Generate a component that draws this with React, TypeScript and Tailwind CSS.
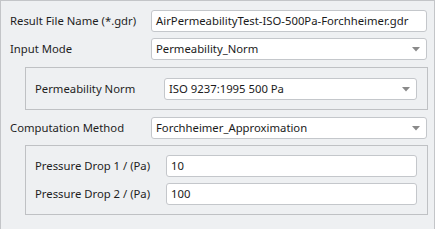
import React from 'react';

const font = { fontFamily: '"Noto Sans", "Open Sans", sans-serif' };

function Arrow() {
  return (
    <svg width="8" height="5" viewBox="0 0 8 5" className="shrink-0">
      <path d="M0 0 H8 L4 4.5 Z" fill="#8a8a8a" />
    </svg>
  );
}

function TextBox({ value, width }: { value: string; width: string }) {
  return (
    <div className={`${width} h-[22px] flex items-center pl-[4px] bg-white border border-[#c4c7cb] rounded-[3px] text-[#1b1b1b] whitespace-nowrap overflow-hidden`}>
      {value}
    </div>
  );
}

function Select({ value, width }: { value: string; width: string }) {
  return (
    <div className={`${width} h-[22px] flex items-center justify-between pl-[4px] pr-[6px] bg-white border border-[#c4c7cb] rounded-[3px] text-[#1b1b1b] whitespace-nowrap`}>
      <span>{value}</span>
      <Arrow />
    </div>
  );
}

export default function App() {
  return (
    <div style={font} className="w-[435px] h-[229px] bg-[#eef0f2] border border-b-0 border-[#c3c5c8] pl-[9px] pr-[6px] pt-[9px] text-[11.3px] text-[#1e1e1e] flex flex-col">
      <div className="flex items-center h-[22px]">
        <div className="w-[141px]">Result File Name (*.gdr)</div>
        <TextBox value="AirPermeabilityTest-ISO-500Pa-Forchheimer.gdr" width="w-[276px]" />
      </div>
      <div className="flex items-center h-[22px] mt-[6px]">
        <div className="w-[141px]">Input Mode</div>
        <Select value="Permeability_Norm" width="w-[276px]" />
      </div>
      <div className="ml-[15px] mt-[7px] w-[403px] border border-[#bfc1c4] pl-[9px] pr-[10px] pt-[10px] pb-[9px]">
        <div className="flex items-center h-[22px]">
          <div className="w-[129px]">Permeability Norm</div>
          <Select value="ISO 9237:1995 500 Pa" width="w-[253px]" />
        </div>
      </div>
      <div className="flex items-center h-[22px] mt-[7px]">
        <div className="w-[141px]">Computation Method</div>
        <Select value="Forchheimer_Approximation" width="w-[276px]" />
      </div>
      <div className="ml-[15px] mt-[6px] w-[403px] border border-[#bfc1c4] pl-[9px] pr-[10px] pt-[9px] pb-[9px] flex flex-col gap-[6px]">
        <div className="flex items-center h-[22px]">
          <div className="w-[131px]">Pressure Drop 1 / (Pa)</div>
          <TextBox value="10" width="w-[251px]" />
        </div>
        <div className="flex items-center h-[22px]">
          <div className="w-[131px]">Pressure Drop 2 / (Pa)</div>
          <TextBox value="100" width="w-[251px]" />
        </div>
      </div>
    </div>
  );
}
